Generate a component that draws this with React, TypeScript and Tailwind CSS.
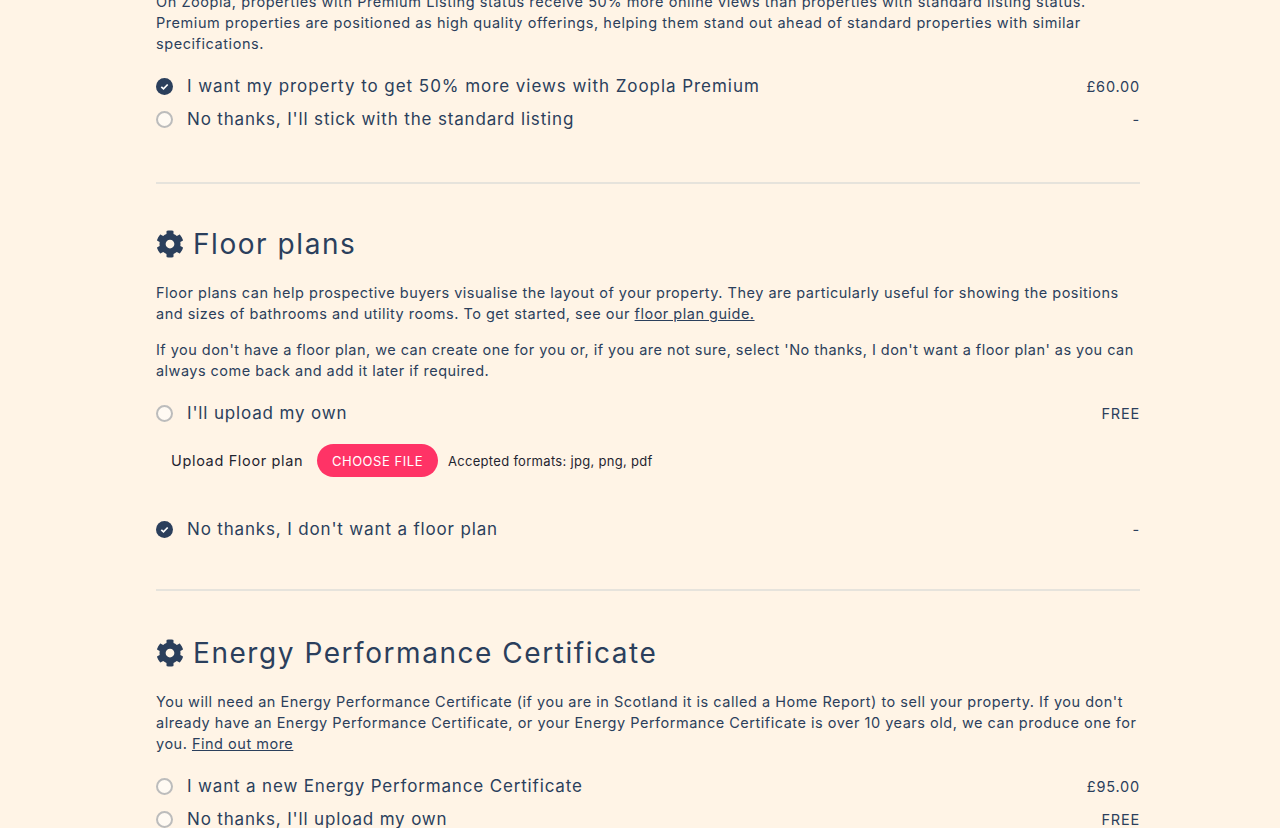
import React from "react";

function Gear() {
  return (
    <svg viewBox="0 0 512 512" className="w-[28px] h-[28px] shrink-0" fill="#2b3f5c">
      <path d="M487.4 315.7l-42.6-24.6c4.3-23.2 4.3-47 0-70.2l42.6-24.6c4.9-2.8 7.1-8.6 5.5-14-11.1-35.6-30-67.8-54.7-94.6-3.8-4.1-10-5.1-14.8-2.3L380.8 110c-17.9-15.4-38.5-27.3-60.8-35.1V25.8c0-5.6-3.9-10.5-9.4-11.7-36.7-8.2-74.3-7.8-109.2 0-5.5 1.2-9.4 6.1-9.4 11.7V75c-22.2 7.9-42.8 19.8-60.8 35.1L88.7 85.5c-4.9-2.8-11-1.9-14.8 2.3-24.7 26.7-43.6 58.9-54.7 94.6-1.7 5.4.6 11.2 5.5 14L67.3 221c-4.3 23.2-4.3 47 0 70.2l-42.6 24.6c-4.9 2.8-7.1 8.6-5.5 14 11.1 35.6 30 67.8 54.7 94.6 3.8 4.1 10 5.1 14.8 2.3l42.6-24.6c17.9 15.4 38.5 27.3 60.8 35.1v49.2c0 5.6 3.9 10.5 9.4 11.7 36.7 8.2 74.3 7.8 109.2 0 5.5-1.2 9.4-6.1 9.4-11.7v-49.2c22.2-7.9 42.8-19.8 60.8-35.1l42.6 24.6c4.9 2.8 11 1.9 14.8-2.3 24.7-26.7 43.6-58.9 54.7-94.6 1.5-5.5-.7-11.3-5.6-14.1zM256 336c-44.1 0-80-35.9-80-80s35.9-80 80-80 80 35.9 80 80-35.9 80-80 80z" />
    </svg>
  );
}

function Radio({ checked }: { checked?: boolean }) {
  if (checked) {
    return (
      <svg viewBox="0 0 17 17" className="w-[17px] h-[17px] shrink-0">
        <circle cx="8.5" cy="8.5" r="8.5" fill="#2b3f5c" />
        <path d="M5.3 8.8l2.2 2.1 4.2-4.4" fill="none" stroke="#fff" strokeWidth="1.7" />
      </svg>
    );
  }
  return <span className="w-[17px] h-[17px] shrink-0 rounded-full border-2 border-[#bcbcbc] bg-[#fffaf3]" />;
}

function Option({ label, price, checked, wide }: { label: string; price: string; checked?: boolean; wide?: boolean }) {
  return (
    <div className="flex items-center h-[33px]">
      <Radio checked={checked} />
      <span className={`ml-[14px] text-[17px] ${wide ? "tracking-[0.95px]" : "tracking-[0.84px]"}`}>{label}</span>
      <span className="ml-auto text-[14.5px] tracking-[0.8px]">{price}</span>
    </div>
  );
}

function Heading({ children }: { children: React.ReactNode }) {
  return (
    <h2 className="flex items-center gap-[9px] h-[36px] text-[28px] tracking-[1.55px]">
      <Gear />
      {children}
    </h2>
  );
}

export default function App() {
  return (
    <div
      className="h-[828px] overflow-hidden bg-[#fff4e6] text-[#2b3f5c] text-[14.5px] leading-[21px]"
      style={{ fontFamily: '"Inter", "Open Sans", sans-serif' }}
    >
      <div className="w-[984px] ml-[156px] -mt-[9px] whitespace-nowrap">
        <p className="tracking-[0.56px]">
          On Zoopla, properties with Premium Listing status receive 50% more online views than properties with standard listing status.
          <br />
          Premium properties are positioned as high quality offerings, helping them stand out ahead of standard properties with similar
          <br />
          specifications.
        </p>
        <div className="mt-[16px]">
          <Option checked wide label="I want my property to get 50% more views with Zoopla Premium" price="£60.00" />
          <Option label="No thanks, I'll stick with the standard listing" price="-" />
        </div>
        <hr className="mt-[46px] border-t-2 border-[#e6e3dc]" />

        <div className="mt-[42px]">
          <Heading>Floor plans</Heading>
        </div>
        <p className="mt-[20px] tracking-[0.5px]">
          Floor plans can help prospective buyers visualise the layout of your property. They are particularly useful for showing the positions
          <br />
          and sizes of bathrooms and utility rooms. To get started, see our <span className="underline">floor plan guide.</span>
        </p>
        <p className="mt-[15px] tracking-[0.47px]">
          If you don't have a floor plan, we can create one for you or, if you are not sure, select 'No thanks, I don't want a floor plan' as you can
          <br />
          always come back and add it later if required.
        </p>
        <div className="mt-[16px]">
          <Option label="I'll upload my own" price="FREE" />
        </div>
        <div className="flex items-center h-[33px] mt-[14px] pl-[15px] text-[#1f2430] tracking-[0.65px]">
          <span className="w-[132px]">Upload Floor plan</span>
          <span className="ml-[14px] pt-[2px] flex items-center justify-center w-[121px] h-[33px] rounded-full bg-[#ff3366] text-white text-[13px] tracking-[0.55px]">
            CHOOSE FILE
          </span>
          <span className="ml-[10px] pt-[2px] text-[13px] tracking-[0.3px]">Accepted formats: jpg, png, pdf</span>
        </div>
        <div className="mt-[36px]">
          <Option checked label="No thanks, I don't want a floor plan" price="-" />
        </div>
        <hr className="mt-[43px] border-t-2 border-[#e6e3dc]" />

        <div className="mt-[44px]">
          <Heading>Energy Performance Certificate</Heading>
        </div>
        <p className="mt-[20px] tracking-[0.51px]">
          You will need an Energy Performance Certificate (if you are in Scotland it is called a Home Report) to sell your property. If you don't
          <br />
          already have an Energy Performance Certificate, or your Energy Performance Certificate is over 10 years old, we can produce one for
          <br />
          you. <span className="underline">Find out more</span>
        </p>
        <div className="mt-[16px]">
          <Option label="I want a new Energy Performance Certificate" price="£95.00" />
          <Option label="No thanks, I'll upload my own" price="FREE" />
        </div>
      </div>
    </div>
  );
}
